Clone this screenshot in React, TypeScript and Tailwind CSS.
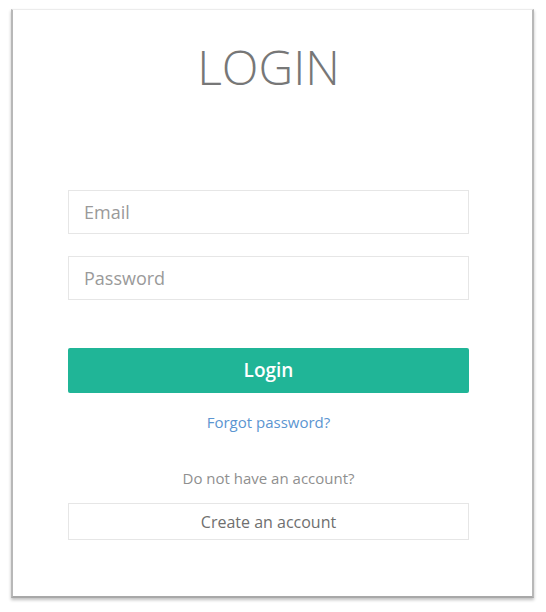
import { useState } from "react";

export default function App() {
  const [email, setEmail] = useState("");
  const [password, setPassword] = useState("");

  return (
    <div className="min-h-screen bg-white pt-[9px] pl-[11px] font-['Open_Sans',sans-serif]">
      {/* KARTA */}
      <div className="w-[523px] h-[589px] bg-white border-x-2 border-b-2 border-t border-x-[#b8b8b8] border-b-[#a8a8a8] border-t-[#ececec] shadow-[0_2px_3px_rgba(0,0,0,0.25)] flex flex-col pl-[55px] pr-[63px]">
        <h1 className="mt-[33px] h-[48px] text-[48px] leading-[48px] font-light text-[#777] text-center">
          LOGIN
        </h1>

        <form className="flex flex-col mt-[99px]" onSubmit={(e) => e.preventDefault()}>
          <input
            type="email"
            value={email}
            onChange={(e) => setEmail(e.target.value)}
            placeholder="Email"
            className="h-[44px] w-full border border-[#e6e6e6] pl-[15px] text-[18px] text-[#555] placeholder:text-[#9a9a9a] outline-none"
          />
          <input
            type="password"
            value={password}
            onChange={(e) => setPassword(e.target.value)}
            placeholder="Password"
            className="mt-[22px] h-[44px] w-full border border-[#e6e6e6] pl-[15px] text-[18px] text-[#555] placeholder:text-[#9a9a9a] outline-none"
          />
          <button
            type="submit"
            className="mt-[48px] h-[45px] w-full rounded-[2px] bg-[#20b597] text-white text-[19px] font-semibold"
          >
            Login
          </button>
        </form>

        <a href="#" className="mt-[19px] self-center text-[15px] leading-[20px] text-[#5b95d1]">
          Forgot password?
        </a>

        <p className="mt-[36px] text-center text-[15px] leading-[20px] text-[#8f8f8f]">
          Do not have an account?
        </p>

        <button className="mt-[15px] h-[37px] w-full border border-[#e6e6e6] text-[16px] text-[#6f6f6f]">
          Create an account
        </button>
      </div>
    </div>
  );
}
